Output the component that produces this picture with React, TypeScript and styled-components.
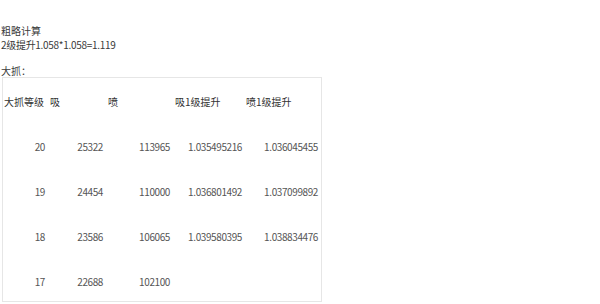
import React from 'react'
import styled, { createGlobalStyle } from 'styled-components'

const GlobalStyle = createGlobalStyle`
  html, body {
    margin: 0;
    padding: 0;
    background: #ffffff;
  }
  body {
    font-family: "Noto Sans CJK SC", "Liberation Sans", sans-serif;
    font-size: 10px;
    color: #3a3a3a;
  }
`

interface Row {
  level: string
  xi: string
  pen: string
  xiUp?: string
  penUp?: string
}

const rows: Row[] = [
  { level: '20', xi: '25322', pen: '113965', xiUp: '1.035495216', penUp: '1.036045455' },
  { level: '19', xi: '24454', pen: '110000', xiUp: '1.036801492', penUp: '1.037099892' },
  { level: '18', xi: '23586', pen: '106065', xiUp: '1.039580395', penUp: '1.038834476' },
  { level: '17', xi: '22688', pen: '102100' },
]

const headers = ['大抓等级', '吸', '喷', '吸1级提升', '喷1级提升']

export default function App() {
  return (
    <Page>
      <GlobalStyle />
      <Line>粗略计算</Line>
      <Line tight>2级提升1.058*1.058=1.119</Line>
      <Caption>大抓：</Caption>
      <Table>
        {headers.map((h, i) => (
          <HeadCell key={h} first={i === 0}>
            {h}
          </HeadCell>
        ))}
        {rows.map((r) => (
          <React.Fragment key={r.level}>
            <Cell>{r.level}</Cell>
            <Cell>{r.xi}</Cell>
            <Cell>{r.pen}</Cell>
            <Cell narrow>{r.xiUp ?? ''}</Cell>
            <Cell>{r.penUp ?? ''}</Cell>
          </React.Fragment>
        ))}
      </Table>
    </Page>
  )
}

const Page = styled.div`
  padding: 24px 0 0 1px;
  width: 600px;
  height: 304px;
  box-sizing: border-box;
  overflow: hidden;
`

const Line = styled.div<{ tight?: boolean }>`
  line-height: 14px;
  height: 14px;
  white-space: nowrap;
  letter-spacing: ${(p) => (p.tight ? '-0.3px' : '0')};
`

const Caption = styled.div`
  margin-top: 13px;
  line-height: 12px;
  height: 12px;
  white-space: nowrap;
`

const Table = styled.div`
  margin-left: 1px;
  width: 320px;
  height: 225px;
  box-sizing: border-box;
  border: 1px solid #e6e6e6;
  padding-top: 1px;
  display: grid;
  grid-template-columns: 45px 58px 67px 71px 77px;
  grid-auto-rows: 45px;
  overflow: hidden;
`

const HeadCell = styled.div<{ first?: boolean }>`
  display: flex;
  align-items: center;
  padding-left: ${(p) => (p.first ? '1px' : '2px')};
  color: #333;
  white-space: nowrap;
`

const Cell = styled.div<{ narrow?: boolean }>`
  display: flex;
  align-items: center;
  justify-content: flex-end;
  padding-right: ${(p) => (p.narrow ? '2px' : '3px')};
  color: #555;
  white-space: nowrap;
  letter-spacing: -0.4px;
`
